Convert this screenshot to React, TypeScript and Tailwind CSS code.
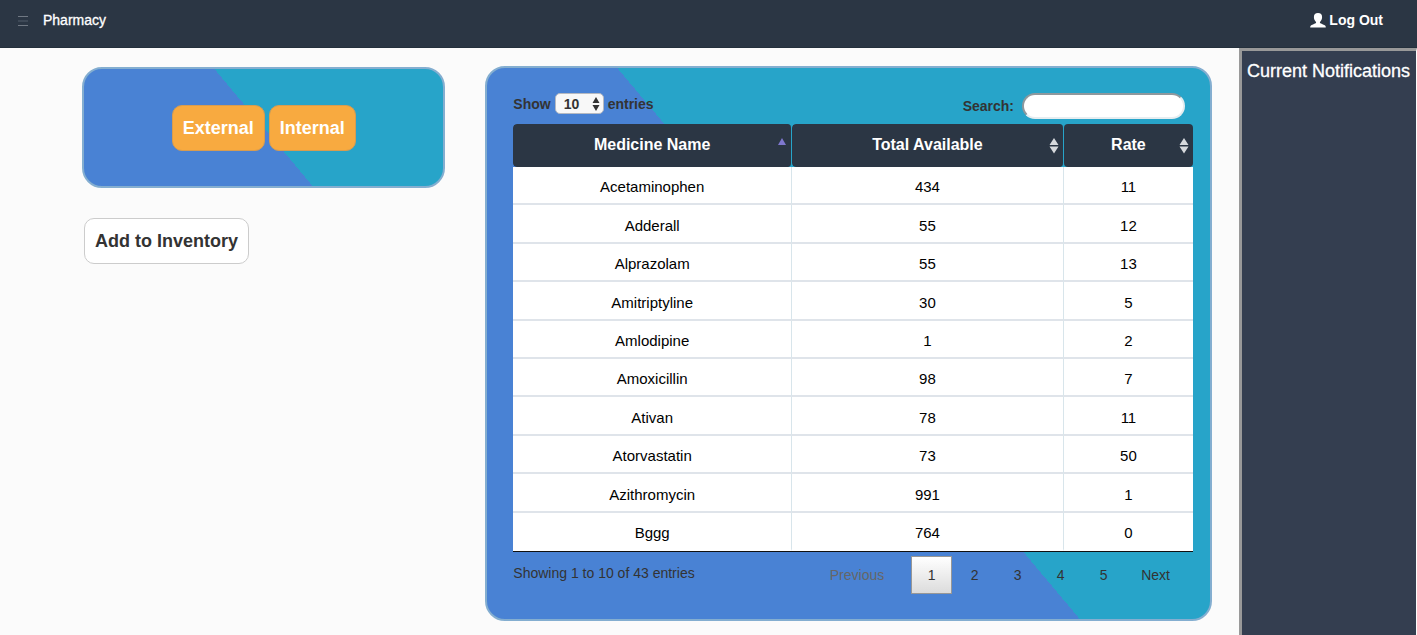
import React from "react";

const medicines: [string, number, number][] = [
  ["Acetaminophen", 434, 11],
  ["Adderall", 55, 12],
  ["Alprazolam", 55, 13],
  ["Amitriptyline", 30, 5],
  ["Amlodipine", 1, 2],
  ["Amoxicillin", 98, 7],
  ["Ativan", 78, 11],
  ["Atorvastatin", 73, 50],
  ["Azithromycin", 991, 1],
  ["Bggg", 764, 0],
];

const columns = [
  { title: "Medicine Name", width: "w-[41%]" },
  { title: "Total Available", width: "w-[40%]" },
  { title: "Rate", width: "w-[19%]" },
];

const panel =
  "rounded-[20px] border-2 border-[#84aed0] bg-[linear-gradient(50deg,#4982d4_50%,#27a4c9_50%)]";

function UserIcon() {
  return (
    <svg viewBox="0 0 16 15" className="h-[15px] w-4" fill="currentColor" aria-hidden="true">
      <path d="M8 0C5.300 0 3.900 1.500 3.900 4c0 1.900.8 3.700 1.900 4.700.5.500.4 1.200-.2 1.500C4.200 10.900 1.700 11.800.9 12.500.4 12.900.2 13.700.2 14.600h15.600c0-.9-.2-1.700-.7-2.100-.8-.7-3.300-1.600-4.700-2.300-.6-.3-.7-1-.2-1.500 1.100-1 1.900-2.800 1.900-4.700C12.100 1.500 10.700 0 8 0Z" />
    </svg>
  );
}

function SortIcon({ active }: { active: boolean }) {
  return (
    <svg viewBox="0 0 10 16" className="absolute right-[4px] top-[14px] h-4 w-[10px]" aria-hidden="true">
      {active ? (
        <path d="M5 0L9 7H1Z" fill="#7f78cf" />
      ) : (
        <path d="M5 0L9.500 7H.5ZM.5 8.500H9.500L5 15.500Z" fill="#d6d9dc" />
      )}
    </svg>
  );
}

function Header() {
  return (
    <header className="flex h-12 items-start justify-between border-b border-[#24303c] bg-[#2b3644] pt-[10px] pr-[34px] pl-[18px] text-sm text-white">
      <div className="flex items-center gap-[15px]">
        <button aria-label="Menu" className="flex flex-col gap-[3px] pt-[2px]">
          <span className="h-px w-[10px] bg-[#707883]" />
          <span className="h-[2px] w-[10px] bg-[#3e4957]" />
          <span className="h-px w-[10px] bg-[#707883]" />
        </button>
        <a href="#pharmacy" className="[-webkit-text-stroke:0.3px_white]">Pharmacy</a>
      </div>
      <a href="#logout" className="flex items-center gap-[3px] font-bold">
        <UserIcon />
        Log Out
      </a>
    </header>
  );
}

function Inventory() {
  const pageButton = "h-[38px] w-[41px]";
  return (
    <section className={panel + " py-[25px] pr-[17px] pl-[26px] text-sm text-[#333]"}>
      <div className="flex h-[31px] items-start justify-between font-bold">
        <label className="flex items-center gap-1">
          Show
          <span className="relative">
            <select
              defaultValue="10"
              className="block h-[21px] w-[49px] appearance-none rounded-[5px] border border-[#b5b9c1] bg-[#f8f8f8] pl-2 font-bold text-[#333]"
            >
              <option>10</option>
              <option>25</option>
              <option>50</option>
              <option>100</option>
            </select>
            <svg viewBox="0 0 8 14" className="pointer-events-none absolute top-1 right-1 h-[14px] w-2" aria-hidden="true">
              <path d="M4 0L7.500 6H.5ZM.5 8H7.500L4 14Z" fill="#333" />
            </svg>
          </span>
          entries
        </label>
        <label className="mr-2 flex items-center gap-2">
          Search:
          <input
            type="search"
            className="h-[26px] w-[163px] appearance-none rounded-[13px] border-2 border-t-[#8e989d] border-r-[#e6edf0] border-b-[#e6edf0] border-l-[#8e989d] bg-white px-2 font-normal outline-none"
          />
        </label>
      </div>

      <table className="h-[428px] w-full table-fixed border-separate border-spacing-0 border-b border-[#111] text-center text-[15px] text-black">
        <thead>
          <tr className="h-[43px] text-base text-white">
            {columns.map((column, i) => (
              <th
                key={column.title}
                className={
                  column.width +
                  " relative h-[43px] rounded-[4px] border-r border-transparent bg-[#2b3644] bg-clip-padding p-0 pb-[2px] last:border-r-0"
                }
              >
                {column.title}
                <SortIcon active={i === 0} />
              </th>
            ))}
          </tr>
        </thead>
        <tbody>
          {medicines.map((row) => (
            <tr key={row[0]} className="group">
              {row.map((value, i) => (
                <td
                  key={i}
                  className="border-r border-b-2 border-r-[#d8e5eb] border-b-[#dfe4ea] bg-white p-0 pt-1 last:border-r-0 group-last:border-b-white"
                >
                  {value}
                </td>
              ))}
            </tr>
          ))}
        </tbody>
      </table>

      <div className="flex items-start justify-between">
        <p className="pt-[11px]">Showing 1 to 10 of 43 entries</p>
        <nav aria-label="Pages" className="mt-1 mr-2 flex gap-[2px]">
          <button disabled className="mr-[10px] h-[38px] px-[15px] text-[#666]">Previous</button>
          <button aria-current="page" className={pageButton + " border border-[#979797] bg-linear-to-b from-white to-[#dcdcdc]"}>
            1
          </button>
          {[2, 3, 4, 5].map((page) => (
            <button key={page} className={pageButton}>{page}</button>
          ))}
          <button className="h-[38px] px-[15px]">Next</button>
        </nav>
      </div>
    </section>
  );
}

export default function App() {
  const orderButton =
    "h-[46px] rounded-[10px] border border-[#d79c50] bg-[#f8aa40] px-[10px] text-white";
  return (
    <div className="flex min-h-screen flex-col bg-[#fbfbfb] font-['Liberation_Sans',Arial,sans-serif]">
      <Header />
      <div className="flex grow">
        <main className="grid grow grid-cols-[1fr_2fr] items-start gap-10 pt-[18px] pr-[27px] pl-[82px]">
          <div className="pt-px text-lg font-bold">
            <section className={panel + " flex h-[121px] items-center justify-center gap-1"}>
              <button className={orderButton}>External</button>
              <button className={orderButton}>Internal</button>
            </section>
            <button className="mt-[30px] ml-[2px] h-[46px] rounded-[10px] border border-[#ccc] bg-white px-[10px] text-[#333]">
              Add to Inventory
            </button>
          </div>
          <Inventory />
        </main>
        <aside className="w-[178px] shrink-0 border-t-3 border-r border-l-3 border-t-[#999] border-r-[#fbfbfb] border-l-[#999] bg-[#343e50]">
          <h2 className="pt-[6px] pl-[5px] text-lg whitespace-nowrap text-white [-webkit-text-stroke:0.3px_white]">
            Current Notifications
          </h2>
        </aside>
      </div>
    </div>
  );
}
